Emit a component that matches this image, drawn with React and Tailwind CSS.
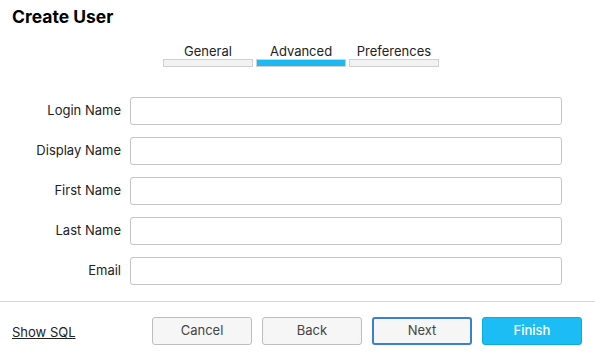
export default function App() {
  const fields = ["Login Name", "Display Name", "First Name", "Last Name", "Email"];
  const tabs = [
    { label: "General", active: false },
    { label: "Advanced", active: true },
    { label: "Preferences", active: false },
  ];

  return (
    <div
      className="w-[595px] h-[358px] bg-white flex flex-col text-[#222]"
      style={{ fontFamily: "Inter, 'Noto Sans', sans-serif" }}
    >
      <h1 className="pl-3 pt-[6px] text-[17.5px] font-bold leading-[22px] text-black">Create User</h1>

      <div className="flex gap-[3px] pl-[163px] mt-[15px]">
        {tabs.map((t) => (
          <div key={t.label} className="w-[90px] flex flex-col items-center">
            <span className="text-[13px] leading-[16px] text-[#222]">{t.label}</span>
            <div
              className={
                t.active
                  ? "mt-[0px] w-full h-[8px] bg-[#1eb9f0] border border-[#d0d0d0]"
                  : "mt-[0px] w-full h-[8px] bg-[#f2f2f2] border border-[#d0d0d0]"
              }
            />
          </div>
        ))}
      </div>

      <div className="flex flex-col gap-[12px] mt-[30px] pr-[33px]">
        {fields.map((f) => (
          <div key={f} className="flex items-center">
            <label className="w-[121px] text-right text-[13px] text-[#222]">{f}</label>
            <input
              type="text"
              className="ml-[9px] flex-1 h-[28px] rounded-[3px] border border-[#c4c4c4] bg-white outline-none"
            />
          </div>
        ))}
      </div>

      <div className="mt-[16px] border-t border-[#d6d6d6]" />

      <div className="flex items-center pl-3 mt-[15px]">
        <a className="text-[13px] underline text-[#222] w-[140px] pt-[4px]">Show SQL</a>
        <div className="flex gap-[10px]">
          <button className="w-[100px] h-[28px] rounded-[3px] border border-[#bdbdbd] bg-[#f6f6f6] text-[13px] text-[#444]">
            Cancel
          </button>
          <button className="w-[100px] h-[28px] rounded-[3px] border border-[#bdbdbd] bg-[#f6f6f6] text-[13px] text-[#444]">
            Back
          </button>
          <button className="w-[100px] h-[28px] rounded-[3px] border-2 border-[#3a7fd5] bg-[#f6f6f6] text-[13px] text-[#444]">
            Next
          </button>
          <button className="w-[100px] h-[28px] rounded-[3px] border border-[#12a8e0] bg-[#1cbcf5] text-[13px] font-medium text-white">
            Finish
          </button>
        </div>
      </div>
    </div>
  );
}
